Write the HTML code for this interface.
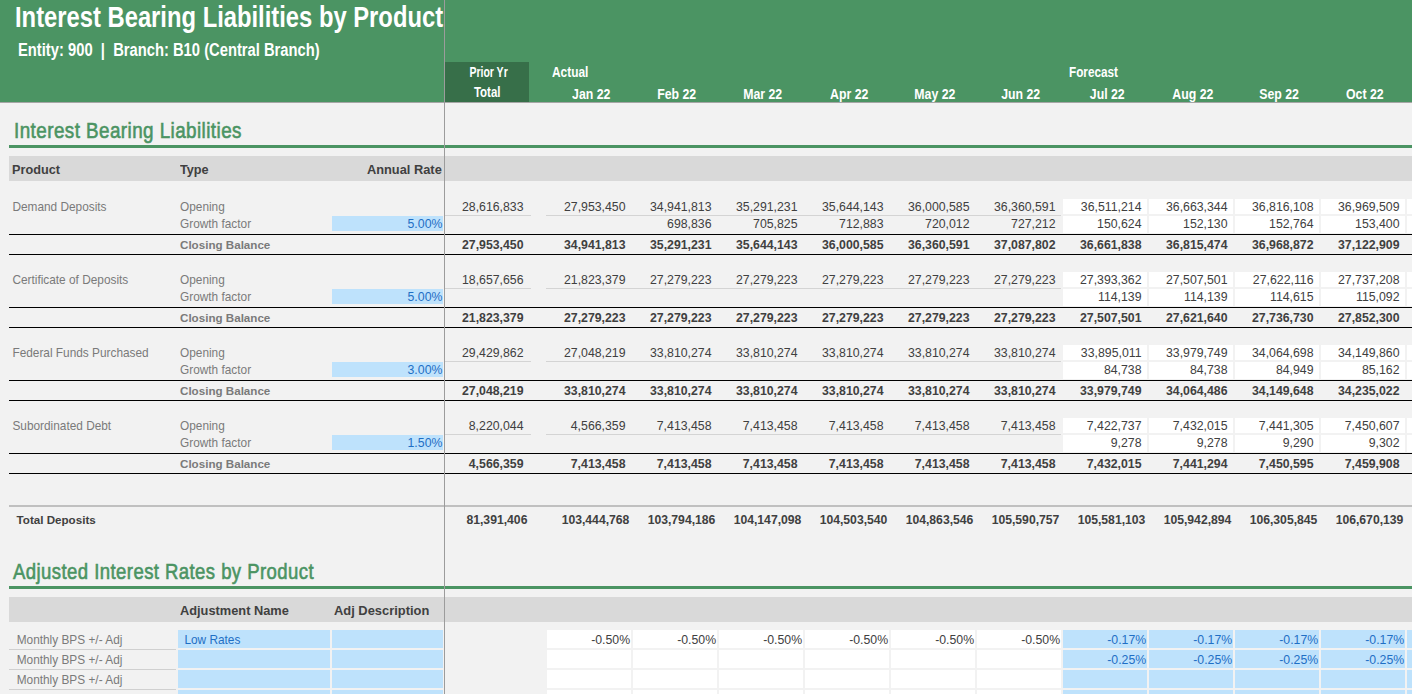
<!DOCTYPE html>
<html><head><meta charset="utf-8"><style>
html,body{margin:0;padding:0;width:1412px;height:694px;overflow:hidden;background:#f2f2f2;}
body{position:relative;font-family:"Liberation Sans", sans-serif;}
div{position:absolute;}
.t{white-space:pre;}
</style></head><body>
<div style="left:0px;top:0px;width:1412px;height:102px;background:#4b9463"></div>
<div style="left:0px;top:102px;width:1412px;height:1px;background:#a6a6a6"></div>
<div class="t" style="top:2px;font-size:29.5px;line-height:29.5px;color:#fff;font-weight:bold;left:14.5px;"><span style="display:inline-block;transform:scaleX(0.806);transform-origin:left">Interest Bearing Liabilities by Product</span></div>
<div class="t" style="top:42px;font-size:17.5px;line-height:17.5px;color:#fff;font-weight:bold;left:17.5px;"><span style="display:inline-block;transform:scaleX(0.843);transform-origin:left">Entity: 900&nbsp;&nbsp;|&nbsp;&nbsp;Branch: B10 (Central Branch)</span></div>
<div style="left:445px;top:62px;width:84px;height:40px;background:#376f49"></div>
<div class="t" style="top:65px;font-size:14px;line-height:14px;color:#fff;font-weight:bold;left:488.6px;width:0;display:flex;justify-content:center;"><span style="display:inline-block;transform:scaleX(0.75);transform-origin:center">Prior Yr</span></div>
<div class="t" style="top:85px;font-size:14px;line-height:14px;color:#fff;font-weight:bold;left:487.3px;width:0;display:flex;justify-content:center;"><span style="display:inline-block;transform:scaleX(0.82);transform-origin:center">Total</span></div>
<div class="t" style="top:65px;font-size:14.5px;line-height:14.5px;color:#fff;font-weight:bold;left:552px;"><span style="display:inline-block;transform:scaleX(0.82);transform-origin:left">Actual</span></div>
<div class="t" style="top:65px;font-size:14.5px;line-height:14.5px;color:#fff;font-weight:bold;left:1068.7px;"><span style="display:inline-block;transform:scaleX(0.81);transform-origin:left">Forecast</span></div>
<div class="t" style="top:87px;font-size:14.3px;line-height:14.3px;color:#fff;font-weight:bold;left:591.0px;width:0;display:flex;justify-content:center;"><span style="display:inline-block;transform:scaleX(0.86);transform-origin:center">Jan 22</span></div>
<div class="t" style="top:87px;font-size:14.3px;line-height:14.3px;color:#fff;font-weight:bold;left:677.0px;width:0;display:flex;justify-content:center;"><span style="display:inline-block;transform:scaleX(0.86);transform-origin:center">Feb 22</span></div>
<div class="t" style="top:87px;font-size:14.3px;line-height:14.3px;color:#fff;font-weight:bold;left:763.0px;width:0;display:flex;justify-content:center;"><span style="display:inline-block;transform:scaleX(0.86);transform-origin:center">Mar 22</span></div>
<div class="t" style="top:87px;font-size:14.3px;line-height:14.3px;color:#fff;font-weight:bold;left:849.0px;width:0;display:flex;justify-content:center;"><span style="display:inline-block;transform:scaleX(0.86);transform-origin:center">Apr 22</span></div>
<div class="t" style="top:87px;font-size:14.3px;line-height:14.3px;color:#fff;font-weight:bold;left:935.0px;width:0;display:flex;justify-content:center;"><span style="display:inline-block;transform:scaleX(0.86);transform-origin:center">May 22</span></div>
<div class="t" style="top:87px;font-size:14.3px;line-height:14.3px;color:#fff;font-weight:bold;left:1021.0px;width:0;display:flex;justify-content:center;"><span style="display:inline-block;transform:scaleX(0.86);transform-origin:center">Jun 22</span></div>
<div class="t" style="top:87px;font-size:14.3px;line-height:14.3px;color:#fff;font-weight:bold;left:1107.0px;width:0;display:flex;justify-content:center;"><span style="display:inline-block;transform:scaleX(0.86);transform-origin:center">Jul 22</span></div>
<div class="t" style="top:87px;font-size:14.3px;line-height:14.3px;color:#fff;font-weight:bold;left:1193.0px;width:0;display:flex;justify-content:center;"><span style="display:inline-block;transform:scaleX(0.86);transform-origin:center">Aug 22</span></div>
<div class="t" style="top:87px;font-size:14.3px;line-height:14.3px;color:#fff;font-weight:bold;left:1279.0px;width:0;display:flex;justify-content:center;"><span style="display:inline-block;transform:scaleX(0.86);transform-origin:center">Sep 22</span></div>
<div class="t" style="top:87px;font-size:14.3px;line-height:14.3px;color:#fff;font-weight:bold;left:1365.0px;width:0;display:flex;justify-content:center;"><span style="display:inline-block;transform:scaleX(0.86);transform-origin:center">Oct 22</span></div>
<div class="t" style="top:121px;font-size:21.5px;line-height:21.5px;color:#4b9463;font-weight:normal;letter-spacing:0.5px;-webkit-text-stroke:0.6px #4b9463;left:13.5px;"><span style="display:inline-block;transform:scaleX(0.876);transform-origin:left">Interest Bearing Liabilities</span></div>
<div style="left:9px;top:145px;width:1403px;height:3px;background:#4b9463"></div>
<div style="left:9px;top:156px;width:1403px;height:25px;background:#d9d9d9"></div>
<div class="t" style="top:163px;font-size:13.5px;line-height:13.5px;color:#404040;font-weight:bold;left:12.1px;"><span style="display:inline-block;transform:scaleX(0.94);transform-origin:left">Product</span></div>
<div class="t" style="top:163px;font-size:13.5px;line-height:13.5px;color:#404040;font-weight:bold;left:180.3px;"><span style="display:inline-block;transform:scaleX(0.94);transform-origin:left">Type</span></div>
<div class="t" style="top:163px;font-size:13.5px;line-height:13.5px;color:#404040;font-weight:bold;right:970.00px;"><span style="display:inline-block;transform:scaleX(0.95);transform-origin:right">Annual Rate</span></div>
<div style="left:1063px;top:199px;width:84px;height:15px;background:#ffffff"></div>
<div style="left:1063px;top:216px;width:84px;height:17px;background:#ffffff"></div>
<div style="left:1149px;top:199px;width:84px;height:15px;background:#ffffff"></div>
<div style="left:1149px;top:216px;width:84px;height:17px;background:#ffffff"></div>
<div style="left:1235px;top:199px;width:84px;height:15px;background:#ffffff"></div>
<div style="left:1235px;top:216px;width:84px;height:17px;background:#ffffff"></div>
<div style="left:1321px;top:199px;width:84px;height:15px;background:#ffffff"></div>
<div style="left:1321px;top:216px;width:84px;height:17px;background:#ffffff"></div>
<div style="left:1407px;top:199px;width:84px;height:15px;background:#ffffff"></div>
<div style="left:1407px;top:216px;width:84px;height:17px;background:#ffffff"></div>
<div style="left:445px;top:215px;width:86px;height:1px;background:#d4d4d4"></div>
<div style="left:546px;top:215px;width:515px;height:1px;background:#d4d4d4"></div>
<div style="left:9px;top:234px;width:1403px;height:1px;background:#000"></div>
<div style="left:9px;top:254px;width:1403px;height:1px;background:#000"></div>
<div class="t" style="top:202px;font-size:11.85px;line-height:11.85px;color:#7a7a7a;font-weight:normal;left:12.4px;">Demand Deposits</div>
<div class="t" style="top:202px;font-size:11.85px;line-height:11.85px;color:#7a7a7a;font-weight:normal;left:180px;">Opening</div>
<div class="t" style="top:219px;font-size:11.85px;line-height:11.85px;color:#7a7a7a;font-weight:normal;left:180px;">Growth factor</div>
<div class="t" style="top:239px;font-size:11.62px;line-height:11.62px;color:#7a7a7a;font-weight:bold;left:180px;">Closing Balance</div>
<div style="left:332px;top:216px;width:111px;height:15px;background:#bee2fc"></div>
<div class="t" style="top:218px;font-size:12.3px;line-height:12.3px;color:#1f6fc5;font-weight:normal;right:969.60px;">5.00%</div>
<div class="t" style="top:201px;font-size:12.3px;line-height:12.3px;color:#404040;font-weight:normal;right:888.50px;">28,616,833</div>
<div class="t" style="top:239px;font-size:12.3px;line-height:12.3px;color:#404040;font-weight:bold;right:888.50px;">27,953,450</div>
<div class="t" style="top:201px;font-size:12.3px;line-height:12.3px;color:#404040;font-weight:normal;right:786.50px;">27,953,450</div>
<div class="t" style="top:239px;font-size:12.3px;line-height:12.3px;color:#404040;font-weight:bold;right:786.50px;">34,941,813</div>
<div class="t" style="top:201px;font-size:12.3px;line-height:12.3px;color:#404040;font-weight:normal;right:700.50px;">34,941,813</div>
<div class="t" style="top:218px;font-size:12.3px;line-height:12.3px;color:#404040;font-weight:normal;right:700.50px;">698,836</div>
<div class="t" style="top:239px;font-size:12.3px;line-height:12.3px;color:#404040;font-weight:bold;right:700.50px;">35,291,231</div>
<div class="t" style="top:201px;font-size:12.3px;line-height:12.3px;color:#404040;font-weight:normal;right:614.50px;">35,291,231</div>
<div class="t" style="top:218px;font-size:12.3px;line-height:12.3px;color:#404040;font-weight:normal;right:614.50px;">705,825</div>
<div class="t" style="top:239px;font-size:12.3px;line-height:12.3px;color:#404040;font-weight:bold;right:614.50px;">35,644,143</div>
<div class="t" style="top:201px;font-size:12.3px;line-height:12.3px;color:#404040;font-weight:normal;right:528.50px;">35,644,143</div>
<div class="t" style="top:218px;font-size:12.3px;line-height:12.3px;color:#404040;font-weight:normal;right:528.50px;">712,883</div>
<div class="t" style="top:239px;font-size:12.3px;line-height:12.3px;color:#404040;font-weight:bold;right:528.50px;">36,000,585</div>
<div class="t" style="top:201px;font-size:12.3px;line-height:12.3px;color:#404040;font-weight:normal;right:442.50px;">36,000,585</div>
<div class="t" style="top:218px;font-size:12.3px;line-height:12.3px;color:#404040;font-weight:normal;right:442.50px;">720,012</div>
<div class="t" style="top:239px;font-size:12.3px;line-height:12.3px;color:#404040;font-weight:bold;right:442.50px;">36,360,591</div>
<div class="t" style="top:201px;font-size:12.3px;line-height:12.3px;color:#404040;font-weight:normal;right:356.50px;">36,360,591</div>
<div class="t" style="top:218px;font-size:12.3px;line-height:12.3px;color:#404040;font-weight:normal;right:356.50px;">727,212</div>
<div class="t" style="top:239px;font-size:12.3px;line-height:12.3px;color:#404040;font-weight:bold;right:356.50px;">37,087,802</div>
<div class="t" style="top:201px;font-size:12.3px;line-height:12.3px;color:#404040;font-weight:normal;right:270.50px;">36,511,214</div>
<div class="t" style="top:218px;font-size:12.3px;line-height:12.3px;color:#404040;font-weight:normal;right:270.50px;">150,624</div>
<div class="t" style="top:239px;font-size:12.3px;line-height:12.3px;color:#404040;font-weight:bold;right:270.50px;">36,661,838</div>
<div class="t" style="top:201px;font-size:12.3px;line-height:12.3px;color:#404040;font-weight:normal;right:184.50px;">36,663,344</div>
<div class="t" style="top:218px;font-size:12.3px;line-height:12.3px;color:#404040;font-weight:normal;right:184.50px;">152,130</div>
<div class="t" style="top:239px;font-size:12.3px;line-height:12.3px;color:#404040;font-weight:bold;right:184.50px;">36,815,474</div>
<div class="t" style="top:201px;font-size:12.3px;line-height:12.3px;color:#404040;font-weight:normal;right:98.50px;">36,816,108</div>
<div class="t" style="top:218px;font-size:12.3px;line-height:12.3px;color:#404040;font-weight:normal;right:98.50px;">152,764</div>
<div class="t" style="top:239px;font-size:12.3px;line-height:12.3px;color:#404040;font-weight:bold;right:98.50px;">36,968,872</div>
<div class="t" style="top:201px;font-size:12.3px;line-height:12.3px;color:#404040;font-weight:normal;right:12.50px;">36,969,509</div>
<div class="t" style="top:218px;font-size:12.3px;line-height:12.3px;color:#404040;font-weight:normal;right:12.50px;">153,400</div>
<div class="t" style="top:239px;font-size:12.3px;line-height:12.3px;color:#404040;font-weight:bold;right:12.50px;">37,122,909</div>
<div style="left:1063px;top:272px;width:84px;height:15px;background:#ffffff"></div>
<div style="left:1063px;top:289px;width:84px;height:17px;background:#ffffff"></div>
<div style="left:1149px;top:272px;width:84px;height:15px;background:#ffffff"></div>
<div style="left:1149px;top:289px;width:84px;height:17px;background:#ffffff"></div>
<div style="left:1235px;top:272px;width:84px;height:15px;background:#ffffff"></div>
<div style="left:1235px;top:289px;width:84px;height:17px;background:#ffffff"></div>
<div style="left:1321px;top:272px;width:84px;height:15px;background:#ffffff"></div>
<div style="left:1321px;top:289px;width:84px;height:17px;background:#ffffff"></div>
<div style="left:1407px;top:272px;width:84px;height:15px;background:#ffffff"></div>
<div style="left:1407px;top:289px;width:84px;height:17px;background:#ffffff"></div>
<div style="left:445px;top:288px;width:86px;height:1px;background:#d4d4d4"></div>
<div style="left:546px;top:288px;width:515px;height:1px;background:#d4d4d4"></div>
<div style="left:9px;top:307px;width:1403px;height:1px;background:#000"></div>
<div style="left:9px;top:327px;width:1403px;height:1px;background:#000"></div>
<div class="t" style="top:275px;font-size:11.85px;line-height:11.85px;color:#7a7a7a;font-weight:normal;left:12.4px;">Certificate of Deposits</div>
<div class="t" style="top:275px;font-size:11.85px;line-height:11.85px;color:#7a7a7a;font-weight:normal;left:180px;">Opening</div>
<div class="t" style="top:292px;font-size:11.85px;line-height:11.85px;color:#7a7a7a;font-weight:normal;left:180px;">Growth factor</div>
<div class="t" style="top:312px;font-size:11.62px;line-height:11.62px;color:#7a7a7a;font-weight:bold;left:180px;">Closing Balance</div>
<div style="left:332px;top:289px;width:111px;height:15px;background:#bee2fc"></div>
<div class="t" style="top:291px;font-size:12.3px;line-height:12.3px;color:#1f6fc5;font-weight:normal;right:969.60px;">5.00%</div>
<div class="t" style="top:274px;font-size:12.3px;line-height:12.3px;color:#404040;font-weight:normal;right:888.50px;">18,657,656</div>
<div class="t" style="top:312px;font-size:12.3px;line-height:12.3px;color:#404040;font-weight:bold;right:888.50px;">21,823,379</div>
<div class="t" style="top:274px;font-size:12.3px;line-height:12.3px;color:#404040;font-weight:normal;right:786.50px;">21,823,379</div>
<div class="t" style="top:312px;font-size:12.3px;line-height:12.3px;color:#404040;font-weight:bold;right:786.50px;">27,279,223</div>
<div class="t" style="top:274px;font-size:12.3px;line-height:12.3px;color:#404040;font-weight:normal;right:700.50px;">27,279,223</div>
<div class="t" style="top:312px;font-size:12.3px;line-height:12.3px;color:#404040;font-weight:bold;right:700.50px;">27,279,223</div>
<div class="t" style="top:274px;font-size:12.3px;line-height:12.3px;color:#404040;font-weight:normal;right:614.50px;">27,279,223</div>
<div class="t" style="top:312px;font-size:12.3px;line-height:12.3px;color:#404040;font-weight:bold;right:614.50px;">27,279,223</div>
<div class="t" style="top:274px;font-size:12.3px;line-height:12.3px;color:#404040;font-weight:normal;right:528.50px;">27,279,223</div>
<div class="t" style="top:312px;font-size:12.3px;line-height:12.3px;color:#404040;font-weight:bold;right:528.50px;">27,279,223</div>
<div class="t" style="top:274px;font-size:12.3px;line-height:12.3px;color:#404040;font-weight:normal;right:442.50px;">27,279,223</div>
<div class="t" style="top:312px;font-size:12.3px;line-height:12.3px;color:#404040;font-weight:bold;right:442.50px;">27,279,223</div>
<div class="t" style="top:274px;font-size:12.3px;line-height:12.3px;color:#404040;font-weight:normal;right:356.50px;">27,279,223</div>
<div class="t" style="top:312px;font-size:12.3px;line-height:12.3px;color:#404040;font-weight:bold;right:356.50px;">27,279,223</div>
<div class="t" style="top:274px;font-size:12.3px;line-height:12.3px;color:#404040;font-weight:normal;right:270.50px;">27,393,362</div>
<div class="t" style="top:291px;font-size:12.3px;line-height:12.3px;color:#404040;font-weight:normal;right:270.50px;">114,139</div>
<div class="t" style="top:312px;font-size:12.3px;line-height:12.3px;color:#404040;font-weight:bold;right:270.50px;">27,507,501</div>
<div class="t" style="top:274px;font-size:12.3px;line-height:12.3px;color:#404040;font-weight:normal;right:184.50px;">27,507,501</div>
<div class="t" style="top:291px;font-size:12.3px;line-height:12.3px;color:#404040;font-weight:normal;right:184.50px;">114,139</div>
<div class="t" style="top:312px;font-size:12.3px;line-height:12.3px;color:#404040;font-weight:bold;right:184.50px;">27,621,640</div>
<div class="t" style="top:274px;font-size:12.3px;line-height:12.3px;color:#404040;font-weight:normal;right:98.50px;">27,622,116</div>
<div class="t" style="top:291px;font-size:12.3px;line-height:12.3px;color:#404040;font-weight:normal;right:98.50px;">114,615</div>
<div class="t" style="top:312px;font-size:12.3px;line-height:12.3px;color:#404040;font-weight:bold;right:98.50px;">27,736,730</div>
<div class="t" style="top:274px;font-size:12.3px;line-height:12.3px;color:#404040;font-weight:normal;right:12.50px;">27,737,208</div>
<div class="t" style="top:291px;font-size:12.3px;line-height:12.3px;color:#404040;font-weight:normal;right:12.50px;">115,092</div>
<div class="t" style="top:312px;font-size:12.3px;line-height:12.3px;color:#404040;font-weight:bold;right:12.50px;">27,852,300</div>
<div style="left:1063px;top:345px;width:84px;height:15px;background:#ffffff"></div>
<div style="left:1063px;top:362px;width:84px;height:17px;background:#ffffff"></div>
<div style="left:1149px;top:345px;width:84px;height:15px;background:#ffffff"></div>
<div style="left:1149px;top:362px;width:84px;height:17px;background:#ffffff"></div>
<div style="left:1235px;top:345px;width:84px;height:15px;background:#ffffff"></div>
<div style="left:1235px;top:362px;width:84px;height:17px;background:#ffffff"></div>
<div style="left:1321px;top:345px;width:84px;height:15px;background:#ffffff"></div>
<div style="left:1321px;top:362px;width:84px;height:17px;background:#ffffff"></div>
<div style="left:1407px;top:345px;width:84px;height:15px;background:#ffffff"></div>
<div style="left:1407px;top:362px;width:84px;height:17px;background:#ffffff"></div>
<div style="left:445px;top:361px;width:86px;height:1px;background:#d4d4d4"></div>
<div style="left:546px;top:361px;width:515px;height:1px;background:#d4d4d4"></div>
<div style="left:9px;top:380px;width:1403px;height:1px;background:#000"></div>
<div style="left:9px;top:400px;width:1403px;height:1px;background:#000"></div>
<div class="t" style="top:348px;font-size:11.85px;line-height:11.85px;color:#7a7a7a;font-weight:normal;left:12.4px;">Federal Funds Purchased</div>
<div class="t" style="top:348px;font-size:11.85px;line-height:11.85px;color:#7a7a7a;font-weight:normal;left:180px;">Opening</div>
<div class="t" style="top:365px;font-size:11.85px;line-height:11.85px;color:#7a7a7a;font-weight:normal;left:180px;">Growth factor</div>
<div class="t" style="top:385px;font-size:11.62px;line-height:11.62px;color:#7a7a7a;font-weight:bold;left:180px;">Closing Balance</div>
<div style="left:332px;top:362px;width:111px;height:15px;background:#bee2fc"></div>
<div class="t" style="top:364px;font-size:12.3px;line-height:12.3px;color:#1f6fc5;font-weight:normal;right:969.60px;">3.00%</div>
<div class="t" style="top:347px;font-size:12.3px;line-height:12.3px;color:#404040;font-weight:normal;right:888.50px;">29,429,862</div>
<div class="t" style="top:385px;font-size:12.3px;line-height:12.3px;color:#404040;font-weight:bold;right:888.50px;">27,048,219</div>
<div class="t" style="top:347px;font-size:12.3px;line-height:12.3px;color:#404040;font-weight:normal;right:786.50px;">27,048,219</div>
<div class="t" style="top:385px;font-size:12.3px;line-height:12.3px;color:#404040;font-weight:bold;right:786.50px;">33,810,274</div>
<div class="t" style="top:347px;font-size:12.3px;line-height:12.3px;color:#404040;font-weight:normal;right:700.50px;">33,810,274</div>
<div class="t" style="top:385px;font-size:12.3px;line-height:12.3px;color:#404040;font-weight:bold;right:700.50px;">33,810,274</div>
<div class="t" style="top:347px;font-size:12.3px;line-height:12.3px;color:#404040;font-weight:normal;right:614.50px;">33,810,274</div>
<div class="t" style="top:385px;font-size:12.3px;line-height:12.3px;color:#404040;font-weight:bold;right:614.50px;">33,810,274</div>
<div class="t" style="top:347px;font-size:12.3px;line-height:12.3px;color:#404040;font-weight:normal;right:528.50px;">33,810,274</div>
<div class="t" style="top:385px;font-size:12.3px;line-height:12.3px;color:#404040;font-weight:bold;right:528.50px;">33,810,274</div>
<div class="t" style="top:347px;font-size:12.3px;line-height:12.3px;color:#404040;font-weight:normal;right:442.50px;">33,810,274</div>
<div class="t" style="top:385px;font-size:12.3px;line-height:12.3px;color:#404040;font-weight:bold;right:442.50px;">33,810,274</div>
<div class="t" style="top:347px;font-size:12.3px;line-height:12.3px;color:#404040;font-weight:normal;right:356.50px;">33,810,274</div>
<div class="t" style="top:385px;font-size:12.3px;line-height:12.3px;color:#404040;font-weight:bold;right:356.50px;">33,810,274</div>
<div class="t" style="top:347px;font-size:12.3px;line-height:12.3px;color:#404040;font-weight:normal;right:270.50px;">33,895,011</div>
<div class="t" style="top:364px;font-size:12.3px;line-height:12.3px;color:#404040;font-weight:normal;right:270.50px;">84,738</div>
<div class="t" style="top:385px;font-size:12.3px;line-height:12.3px;color:#404040;font-weight:bold;right:270.50px;">33,979,749</div>
<div class="t" style="top:347px;font-size:12.3px;line-height:12.3px;color:#404040;font-weight:normal;right:184.50px;">33,979,749</div>
<div class="t" style="top:364px;font-size:12.3px;line-height:12.3px;color:#404040;font-weight:normal;right:184.50px;">84,738</div>
<div class="t" style="top:385px;font-size:12.3px;line-height:12.3px;color:#404040;font-weight:bold;right:184.50px;">34,064,486</div>
<div class="t" style="top:347px;font-size:12.3px;line-height:12.3px;color:#404040;font-weight:normal;right:98.50px;">34,064,698</div>
<div class="t" style="top:364px;font-size:12.3px;line-height:12.3px;color:#404040;font-weight:normal;right:98.50px;">84,949</div>
<div class="t" style="top:385px;font-size:12.3px;line-height:12.3px;color:#404040;font-weight:bold;right:98.50px;">34,149,648</div>
<div class="t" style="top:347px;font-size:12.3px;line-height:12.3px;color:#404040;font-weight:normal;right:12.50px;">34,149,860</div>
<div class="t" style="top:364px;font-size:12.3px;line-height:12.3px;color:#404040;font-weight:normal;right:12.50px;">85,162</div>
<div class="t" style="top:385px;font-size:12.3px;line-height:12.3px;color:#404040;font-weight:bold;right:12.50px;">34,235,022</div>
<div style="left:1063px;top:418px;width:84px;height:15px;background:#ffffff"></div>
<div style="left:1063px;top:435px;width:84px;height:17px;background:#ffffff"></div>
<div style="left:1149px;top:418px;width:84px;height:15px;background:#ffffff"></div>
<div style="left:1149px;top:435px;width:84px;height:17px;background:#ffffff"></div>
<div style="left:1235px;top:418px;width:84px;height:15px;background:#ffffff"></div>
<div style="left:1235px;top:435px;width:84px;height:17px;background:#ffffff"></div>
<div style="left:1321px;top:418px;width:84px;height:15px;background:#ffffff"></div>
<div style="left:1321px;top:435px;width:84px;height:17px;background:#ffffff"></div>
<div style="left:1407px;top:418px;width:84px;height:15px;background:#ffffff"></div>
<div style="left:1407px;top:435px;width:84px;height:17px;background:#ffffff"></div>
<div style="left:445px;top:434px;width:86px;height:1px;background:#d4d4d4"></div>
<div style="left:546px;top:434px;width:515px;height:1px;background:#d4d4d4"></div>
<div style="left:9px;top:453px;width:1403px;height:1px;background:#000"></div>
<div style="left:9px;top:473px;width:1403px;height:1px;background:#000"></div>
<div class="t" style="top:421px;font-size:11.85px;line-height:11.85px;color:#7a7a7a;font-weight:normal;left:12.4px;">Subordinated Debt</div>
<div class="t" style="top:421px;font-size:11.85px;line-height:11.85px;color:#7a7a7a;font-weight:normal;left:180px;">Opening</div>
<div class="t" style="top:438px;font-size:11.85px;line-height:11.85px;color:#7a7a7a;font-weight:normal;left:180px;">Growth factor</div>
<div class="t" style="top:458px;font-size:11.62px;line-height:11.62px;color:#7a7a7a;font-weight:bold;left:180px;">Closing Balance</div>
<div style="left:332px;top:435px;width:111px;height:15px;background:#bee2fc"></div>
<div class="t" style="top:437px;font-size:12.3px;line-height:12.3px;color:#1f6fc5;font-weight:normal;right:969.60px;">1.50%</div>
<div class="t" style="top:420px;font-size:12.3px;line-height:12.3px;color:#404040;font-weight:normal;right:888.50px;">8,220,044</div>
<div class="t" style="top:458px;font-size:12.3px;line-height:12.3px;color:#404040;font-weight:bold;right:888.50px;">4,566,359</div>
<div class="t" style="top:420px;font-size:12.3px;line-height:12.3px;color:#404040;font-weight:normal;right:786.50px;">4,566,359</div>
<div class="t" style="top:458px;font-size:12.3px;line-height:12.3px;color:#404040;font-weight:bold;right:786.50px;">7,413,458</div>
<div class="t" style="top:420px;font-size:12.3px;line-height:12.3px;color:#404040;font-weight:normal;right:700.50px;">7,413,458</div>
<div class="t" style="top:458px;font-size:12.3px;line-height:12.3px;color:#404040;font-weight:bold;right:700.50px;">7,413,458</div>
<div class="t" style="top:420px;font-size:12.3px;line-height:12.3px;color:#404040;font-weight:normal;right:614.50px;">7,413,458</div>
<div class="t" style="top:458px;font-size:12.3px;line-height:12.3px;color:#404040;font-weight:bold;right:614.50px;">7,413,458</div>
<div class="t" style="top:420px;font-size:12.3px;line-height:12.3px;color:#404040;font-weight:normal;right:528.50px;">7,413,458</div>
<div class="t" style="top:458px;font-size:12.3px;line-height:12.3px;color:#404040;font-weight:bold;right:528.50px;">7,413,458</div>
<div class="t" style="top:420px;font-size:12.3px;line-height:12.3px;color:#404040;font-weight:normal;right:442.50px;">7,413,458</div>
<div class="t" style="top:458px;font-size:12.3px;line-height:12.3px;color:#404040;font-weight:bold;right:442.50px;">7,413,458</div>
<div class="t" style="top:420px;font-size:12.3px;line-height:12.3px;color:#404040;font-weight:normal;right:356.50px;">7,413,458</div>
<div class="t" style="top:458px;font-size:12.3px;line-height:12.3px;color:#404040;font-weight:bold;right:356.50px;">7,413,458</div>
<div class="t" style="top:420px;font-size:12.3px;line-height:12.3px;color:#404040;font-weight:normal;right:270.50px;">7,422,737</div>
<div class="t" style="top:437px;font-size:12.3px;line-height:12.3px;color:#404040;font-weight:normal;right:270.50px;">9,278</div>
<div class="t" style="top:458px;font-size:12.3px;line-height:12.3px;color:#404040;font-weight:bold;right:270.50px;">7,432,015</div>
<div class="t" style="top:420px;font-size:12.3px;line-height:12.3px;color:#404040;font-weight:normal;right:184.50px;">7,432,015</div>
<div class="t" style="top:437px;font-size:12.3px;line-height:12.3px;color:#404040;font-weight:normal;right:184.50px;">9,278</div>
<div class="t" style="top:458px;font-size:12.3px;line-height:12.3px;color:#404040;font-weight:bold;right:184.50px;">7,441,294</div>
<div class="t" style="top:420px;font-size:12.3px;line-height:12.3px;color:#404040;font-weight:normal;right:98.50px;">7,441,305</div>
<div class="t" style="top:437px;font-size:12.3px;line-height:12.3px;color:#404040;font-weight:normal;right:98.50px;">9,290</div>
<div class="t" style="top:458px;font-size:12.3px;line-height:12.3px;color:#404040;font-weight:bold;right:98.50px;">7,450,595</div>
<div class="t" style="top:420px;font-size:12.3px;line-height:12.3px;color:#404040;font-weight:normal;right:12.50px;">7,450,607</div>
<div class="t" style="top:437px;font-size:12.3px;line-height:12.3px;color:#404040;font-weight:normal;right:12.50px;">9,302</div>
<div class="t" style="top:458px;font-size:12.3px;line-height:12.3px;color:#404040;font-weight:bold;right:12.50px;">7,459,908</div>
<div style="left:9px;top:505px;width:1403px;height:2px;background:#c0c0c0"></div>
<div class="t" style="top:514px;font-size:11.62px;line-height:11.62px;color:#404040;font-weight:bold;left:16.6px;">Total Deposits</div>
<div class="t" style="top:514px;font-size:12.2px;line-height:12.2px;color:#404040;font-weight:bold;right:884.60px;">81,391,406</div>
<div class="t" style="top:514px;font-size:12.2px;line-height:12.2px;color:#404040;font-weight:bold;right:782.60px;">103,444,768</div>
<div class="t" style="top:514px;font-size:12.2px;line-height:12.2px;color:#404040;font-weight:bold;right:696.60px;">103,794,186</div>
<div class="t" style="top:514px;font-size:12.2px;line-height:12.2px;color:#404040;font-weight:bold;right:610.60px;">104,147,098</div>
<div class="t" style="top:514px;font-size:12.2px;line-height:12.2px;color:#404040;font-weight:bold;right:524.60px;">104,503,540</div>
<div class="t" style="top:514px;font-size:12.2px;line-height:12.2px;color:#404040;font-weight:bold;right:438.60px;">104,863,546</div>
<div class="t" style="top:514px;font-size:12.2px;line-height:12.2px;color:#404040;font-weight:bold;right:352.60px;">105,590,757</div>
<div class="t" style="top:514px;font-size:12.2px;line-height:12.2px;color:#404040;font-weight:bold;right:266.60px;">105,581,103</div>
<div class="t" style="top:514px;font-size:12.2px;line-height:12.2px;color:#404040;font-weight:bold;right:180.60px;">105,942,894</div>
<div class="t" style="top:514px;font-size:12.2px;line-height:12.2px;color:#404040;font-weight:bold;right:94.60px;">106,305,845</div>
<div class="t" style="top:514px;font-size:12.2px;line-height:12.2px;color:#404040;font-weight:bold;right:8.60px;">106,670,139</div>
<div class="t" style="top:562px;font-size:21.5px;line-height:21.5px;color:#4b9463;font-weight:normal;letter-spacing:0.5px;-webkit-text-stroke:0.6px #4b9463;left:12.5px;"><span style="display:inline-block;transform:scaleX(0.862);transform-origin:left">Adjusted Interest Rates by Product</span></div>
<div style="left:9px;top:586px;width:1403px;height:3px;background:#4b9463"></div>
<div style="left:9px;top:597px;width:1403px;height:25px;background:#d9d9d9"></div>
<div class="t" style="top:604px;font-size:13.5px;line-height:13.5px;color:#404040;font-weight:bold;left:180.2px;"><span style="display:inline-block;transform:scaleX(0.948);transform-origin:left">Adjustment Name</span></div>
<div class="t" style="top:604px;font-size:13.5px;line-height:13.5px;color:#404040;font-weight:bold;left:334.2px;"><span style="display:inline-block;transform:scaleX(0.955);transform-origin:left">Adj Description</span></div>
<div class="t" style="top:635px;font-size:11.85px;line-height:11.85px;color:#7a7a7a;font-weight:normal;left:16.7px;">Monthly BPS +/- Adj</div>
<div style="left:9px;top:649px;width:167px;height:1px;background:#d0d0d0"></div>
<div style="left:178px;top:630px;width:152px;height:18px;background:#bee2fc"></div>
<div style="left:332px;top:630px;width:111px;height:18px;background:#bee2fc"></div>
<div style="left:547px;top:630px;width:84px;height:18px;background:#ffffff"></div>
<div style="left:633px;top:630px;width:84px;height:18px;background:#ffffff"></div>
<div style="left:719px;top:630px;width:84px;height:18px;background:#ffffff"></div>
<div style="left:805px;top:630px;width:84px;height:18px;background:#ffffff"></div>
<div style="left:891px;top:630px;width:84px;height:18px;background:#ffffff"></div>
<div style="left:977px;top:630px;width:84px;height:18px;background:#ffffff"></div>
<div style="left:1063px;top:630px;width:84px;height:18px;background:#bee2fc"></div>
<div style="left:1149px;top:630px;width:84px;height:18px;background:#bee2fc"></div>
<div style="left:1235px;top:630px;width:84px;height:18px;background:#bee2fc"></div>
<div style="left:1321px;top:630px;width:84px;height:18px;background:#bee2fc"></div>
<div style="left:1407px;top:630px;width:84px;height:18px;background:#bee2fc"></div>
<div class="t" style="top:655px;font-size:11.85px;line-height:11.85px;color:#7a7a7a;font-weight:normal;left:16.7px;">Monthly BPS +/- Adj</div>
<div style="left:9px;top:669px;width:167px;height:1px;background:#d0d0d0"></div>
<div style="left:178px;top:650px;width:152px;height:18px;background:#bee2fc"></div>
<div style="left:332px;top:650px;width:111px;height:18px;background:#bee2fc"></div>
<div style="left:547px;top:650px;width:84px;height:18px;background:#ffffff"></div>
<div style="left:633px;top:650px;width:84px;height:18px;background:#ffffff"></div>
<div style="left:719px;top:650px;width:84px;height:18px;background:#ffffff"></div>
<div style="left:805px;top:650px;width:84px;height:18px;background:#ffffff"></div>
<div style="left:891px;top:650px;width:84px;height:18px;background:#ffffff"></div>
<div style="left:977px;top:650px;width:84px;height:18px;background:#ffffff"></div>
<div style="left:1063px;top:650px;width:84px;height:18px;background:#bee2fc"></div>
<div style="left:1149px;top:650px;width:84px;height:18px;background:#bee2fc"></div>
<div style="left:1235px;top:650px;width:84px;height:18px;background:#bee2fc"></div>
<div style="left:1321px;top:650px;width:84px;height:18px;background:#bee2fc"></div>
<div style="left:1407px;top:650px;width:84px;height:18px;background:#bee2fc"></div>
<div class="t" style="top:675px;font-size:11.85px;line-height:11.85px;color:#7a7a7a;font-weight:normal;left:16.7px;">Monthly BPS +/- Adj</div>
<div style="left:9px;top:689px;width:167px;height:1px;background:#d0d0d0"></div>
<div style="left:178px;top:670px;width:152px;height:18px;background:#bee2fc"></div>
<div style="left:332px;top:670px;width:111px;height:18px;background:#bee2fc"></div>
<div style="left:547px;top:670px;width:84px;height:18px;background:#ffffff"></div>
<div style="left:633px;top:670px;width:84px;height:18px;background:#ffffff"></div>
<div style="left:719px;top:670px;width:84px;height:18px;background:#ffffff"></div>
<div style="left:805px;top:670px;width:84px;height:18px;background:#ffffff"></div>
<div style="left:891px;top:670px;width:84px;height:18px;background:#ffffff"></div>
<div style="left:977px;top:670px;width:84px;height:18px;background:#ffffff"></div>
<div style="left:1063px;top:670px;width:84px;height:18px;background:#bee2fc"></div>
<div style="left:1149px;top:670px;width:84px;height:18px;background:#bee2fc"></div>
<div style="left:1235px;top:670px;width:84px;height:18px;background:#bee2fc"></div>
<div style="left:1321px;top:670px;width:84px;height:18px;background:#bee2fc"></div>
<div style="left:1407px;top:670px;width:84px;height:18px;background:#bee2fc"></div>
<div class="t" style="top:695px;font-size:11.85px;line-height:11.85px;color:#7a7a7a;font-weight:normal;left:16.7px;">Monthly BPS +/- Adj</div>
<div style="left:9px;top:709px;width:167px;height:1px;background:#d0d0d0"></div>
<div style="left:178px;top:690px;width:152px;height:18px;background:#bee2fc"></div>
<div style="left:332px;top:690px;width:111px;height:18px;background:#bee2fc"></div>
<div style="left:547px;top:690px;width:84px;height:18px;background:#ffffff"></div>
<div style="left:633px;top:690px;width:84px;height:18px;background:#ffffff"></div>
<div style="left:719px;top:690px;width:84px;height:18px;background:#ffffff"></div>
<div style="left:805px;top:690px;width:84px;height:18px;background:#ffffff"></div>
<div style="left:891px;top:690px;width:84px;height:18px;background:#ffffff"></div>
<div style="left:977px;top:690px;width:84px;height:18px;background:#ffffff"></div>
<div style="left:1063px;top:690px;width:84px;height:18px;background:#bee2fc"></div>
<div style="left:1149px;top:690px;width:84px;height:18px;background:#bee2fc"></div>
<div style="left:1235px;top:690px;width:84px;height:18px;background:#bee2fc"></div>
<div style="left:1321px;top:690px;width:84px;height:18px;background:#bee2fc"></div>
<div style="left:1407px;top:690px;width:84px;height:18px;background:#bee2fc"></div>
<div class="t" style="top:635px;font-size:11.85px;line-height:11.85px;color:#1f6fc5;font-weight:normal;left:184.4px;">Low Rates</div>
<div class="t" style="top:634px;font-size:12.3px;line-height:12.3px;color:#404040;font-weight:normal;right:781.90px;">-0.50%</div>
<div class="t" style="top:634px;font-size:12.3px;line-height:12.3px;color:#404040;font-weight:normal;right:695.90px;">-0.50%</div>
<div class="t" style="top:634px;font-size:12.3px;line-height:12.3px;color:#404040;font-weight:normal;right:609.90px;">-0.50%</div>
<div class="t" style="top:634px;font-size:12.3px;line-height:12.3px;color:#404040;font-weight:normal;right:523.90px;">-0.50%</div>
<div class="t" style="top:634px;font-size:12.3px;line-height:12.3px;color:#404040;font-weight:normal;right:437.90px;">-0.50%</div>
<div class="t" style="top:634px;font-size:12.3px;line-height:12.3px;color:#404040;font-weight:normal;right:351.90px;">-0.50%</div>
<div class="t" style="top:634px;font-size:12.3px;line-height:12.3px;color:#1f6fc5;font-weight:normal;right:265.80px;">-0.17%</div>
<div class="t" style="top:654px;font-size:12.3px;line-height:12.3px;color:#1f6fc5;font-weight:normal;right:265.80px;">-0.25%</div>
<div class="t" style="top:634px;font-size:12.3px;line-height:12.3px;color:#1f6fc5;font-weight:normal;right:179.80px;">-0.17%</div>
<div class="t" style="top:654px;font-size:12.3px;line-height:12.3px;color:#1f6fc5;font-weight:normal;right:179.80px;">-0.25%</div>
<div class="t" style="top:634px;font-size:12.3px;line-height:12.3px;color:#1f6fc5;font-weight:normal;right:93.80px;">-0.17%</div>
<div class="t" style="top:654px;font-size:12.3px;line-height:12.3px;color:#1f6fc5;font-weight:normal;right:93.80px;">-0.25%</div>
<div class="t" style="top:634px;font-size:12.3px;line-height:12.3px;color:#1f6fc5;font-weight:normal;right:7.80px;">-0.17%</div>
<div class="t" style="top:654px;font-size:12.3px;line-height:12.3px;color:#1f6fc5;font-weight:normal;right:7.80px;">-0.25%</div>
<div style="left:444px;top:0px;width:1px;height:694px;background:#9c9c9c"></div>
</body></html>
